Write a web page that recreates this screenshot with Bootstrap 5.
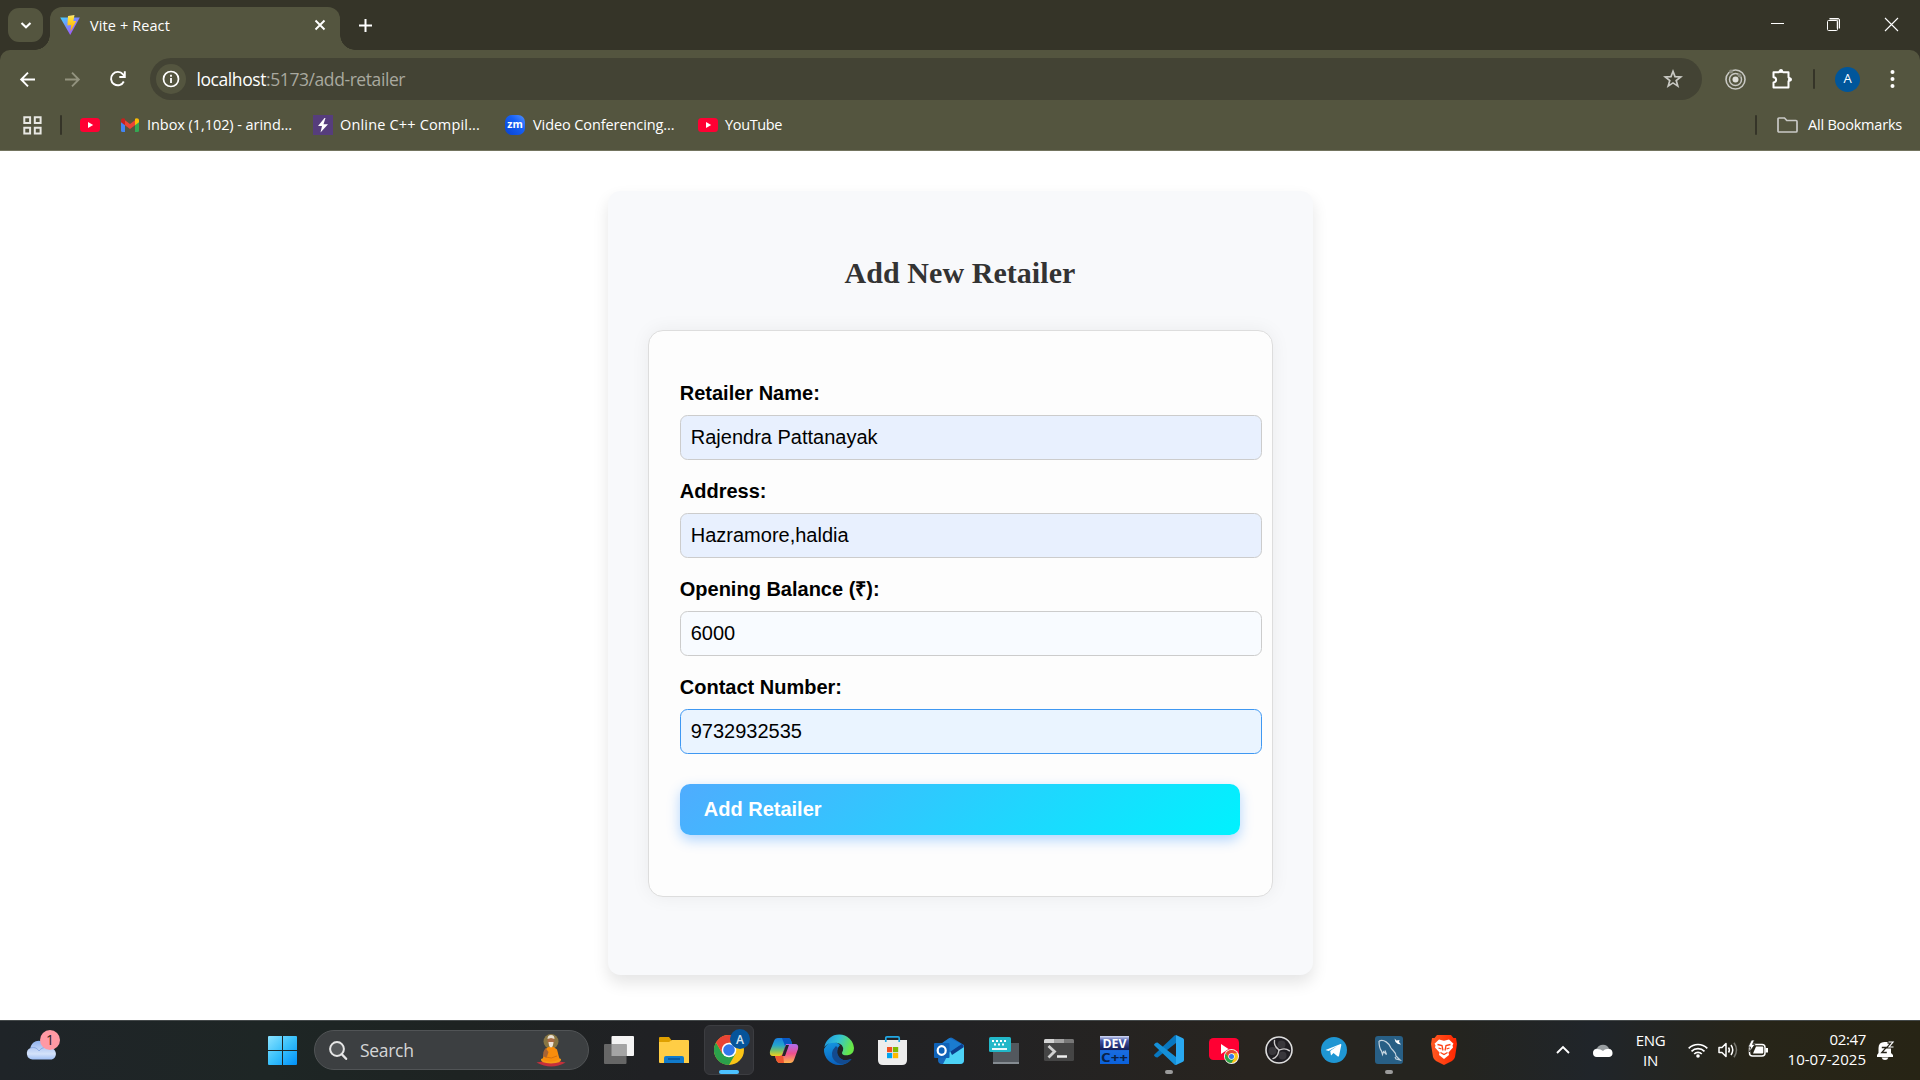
<!DOCTYPE html>
<html lang="en">
<head>
<meta charset="utf-8">
<meta name="viewport" content="width=device-width, initial-scale=1">
<title>Vite + React</title>
<link href="https://cdn.jsdelivr.net/npm/bootstrap@5.3.0/dist/css/bootstrap.min.css" rel="stylesheet">
<style>
  :root { --frame:#353428; --bar:#54553f; --omni:#434334; }
  body { width:1920px; height:1080px; overflow:hidden; background:#fff; font-family:"Open Sans","Noto Sans",sans-serif; color:#fff; }
  svg { display:block; flex:none; overflow:visible; }
  /* tab strip */
  .tabstrip { height:50px; background:var(--frame); }
  .tab-search { width:35px; height:34px; margin:8px 7px 0 8px; border-radius:11px; background:var(--bar); }
  .active-tab { width:290px; height:43px; margin-top:7px; padding:0 15px 7px 10px; background:var(--bar); border-radius:12px 12px 0 0; position:relative; }
  .active-tab::before,.active-tab::after { content:""; position:absolute; bottom:0; width:15px; height:15px; }
  .active-tab::before { left:-15px; background:radial-gradient(circle at 0 0,transparent 14.5px,var(--bar) 15px); }
  .active-tab::after { right:-15px; background:radial-gradient(circle at 100% 0,transparent 14.5px,var(--bar) 15px); }
  .tab-title { font-size:14.5px; letter-spacing:.1px; margin-left:10px; padding-top:1px; }
  .new-tab { margin:19px 0 0 19px; }
  .win-buttons { padding:18px 22px 0 0; }
  .win-buttons svg + svg { margin-left:43px; }
  .win-buttons svg:last-child { margin-left:45px; }
  /* toolbar */
  .toolbar-wrap { background:var(--frame); }
  .toolbar { height:50px; padding-top:8px; background:var(--bar); border-radius:10px 10px 0 0; align-items:flex-start; }
  .toolbar > .d-flex { height:42px; }
  .nav-buttons { gap:30px; padding-left:20px; }
  .omnibox { width:1552px; margin-left:24px; border-radius:21px; background:var(--omni); padding:0 19.5px 0 6px; }
  .site-info { width:30px; height:30px; border-radius:50%; background:var(--bar); }
  .address { font-size:17.5px; letter-spacing:-.42px; margin-left:10.500px; color:#a9a99f; }
  .vsep { width:2px; height:20px; border-radius:1px; background:var(--frame); }
  .avatar { width:25px; height:25px; border-radius:50%; background:#00569b; font-size:13px; }
  /* bookmarks */
  .bookmarks { height:51px; background:var(--bar); border-bottom:1px solid #73745f; font-size:14.5px; padding:0 18px 0 23px; white-space:nowrap; }
  .bookmarks span { letter-spacing:-.2px; line-height:20px; }
  .bookmarks .bm-mail { margin-left:8px; width:166px; letter-spacing:-.06px; }
  .bookmarks .bm-cpp { margin-left:7px; width:165px; letter-spacing:.17px; }
  .bookmarks .bm-zoom { margin-left:8px; width:165px; letter-spacing:-.09px; }
  .bookmarks .bm-yt { margin-left:7px; letter-spacing:-.35px; }
  /* page */
  .page { height:869px; padding-top:40px; font-family:"Liberation Sans",Arial,sans-serif; color:#000; }
  .shell { width:705px; height:784px; padding:64px 40px 0; border-radius:12.5px; background:#f8f9fb; box-shadow:0 8px 16px rgba(0,0,0,.105); }
  .shell h2 { margin:0; font:bold 30px/36px "Liberation Serif","Times New Roman",serif; letter-spacing:.05px; color:#333; text-align:center; }
  .entry { width:625px; height:567px; margin-top:39px; padding:50px 31px 0 31.25px; background:#fdfdfd; border:1px solid #ddd; border-radius:15px; box-shadow:0 0 19px rgba(0,0,0,.06); }
  .entry label { display:block; height:34px; padding-top:1px; font-size:20px; line-height:23px; font-weight:bold; }
  .entry .form-control { width:582px; height:45px; margin-bottom:19px; padding:0 10px 1px; font-size:20px; color:#000; background:#f8fbff; border:1px solid #ccc; border-radius:7.5px; box-shadow:none; }
  .entry .filled { background:#e8f0fe; }
  .entry .active-field { background:#eaf4ff; border-color:#3f98f2; }
  .entry .btn { width:560px; height:51px; margin-top:11px; padding:0 24px 2px; border:0; border-radius:10px; font-size:20px; font-weight:bold; text-align:left; color:#fff; background:linear-gradient(135deg,#4facfe,#00f2fe); box-shadow:0 5px 13px rgba(0,123,255,.3); }
  /* taskbar */
  .taskbar { height:60px; border-top:1px solid #44494a; background:linear-gradient(90deg,#1f2428 0,#1e2625 14%,#1e2322 24%,#202124 34%,#222224 50%,#28241f 65%,#24241f 76%,#20252a 83%,#272519 91%,#272415 100%); }
  .weather { width:268px; padding-left:25.5px; }
  .search-pill { width:275px; height:40px; margin:-1px 12px 0 17px; border-radius:20px; border:1px solid #515456; background:#3c3f41; padding:0 22px 0 14px; }
  .search-pill span { font-size:17.5px; letter-spacing:-.3px; color:#d5d6d7; margin-left:13px; }
  .apps { margin-left:-7px; }
  .app { width:50px; height:50px; margin-right:5px; margin-top:-1px; position:relative; border-radius:6px; }
  .app.current { background:#303135; border:1px solid #3c3d41; }
  .app.current::after,.app.open::after { content:""; position:absolute; bottom:1px; left:50%; height:4px; border-radius:2px; transform:translateX(-50%); }
  .app.current::after { bottom:0; width:20px; background:#4cc2ff; }
  .app.open::after { width:8px; background:#9b9b9b; }
  .tray { font-size:15px; line-height:20px; letter-spacing:-.35px; }
  .clock { width:98px; margin-top:-4px; }
  .clock .day { letter-spacing:.02px; }
</style>
</head>
<body>
<svg width="0" height="0" class="position-absolute">
  <defs>
    <linearGradient id="viteA" x1="0" y1="0" x2="1" y2="1"><stop stop-color="#41d1ff"/><stop offset="1" stop-color="#bd34fe"/></linearGradient>
    <linearGradient id="viteB" x1="0" y1="0" x2="0" y2="1"><stop stop-color="#ffea83"/><stop offset=".2" stop-color="#ffdd35"/><stop offset="1" stop-color="#ffa800"/></linearGradient>
    <linearGradient id="zoomG" x1="0" y1="1" x2="1" y2="0"><stop stop-color="#0842d0"/><stop offset=".6" stop-color="#1660f5"/><stop offset="1" stop-color="#5291ff"/></linearGradient>
    <linearGradient id="winG" x1="0" y1="0" x2="1" y2="1" gradientUnits="objectBoundingBox"><stop stop-color="#8be3ff"/><stop offset=".5" stop-color="#38c0fb"/><stop offset="1" stop-color="#0090f8"/></linearGradient>
    <linearGradient id="cloudG" x1="0" y1="0" x2="0" y2="1"><stop stop-color="#8fb2ee"/><stop offset=".7" stop-color="#d4e2fa"/><stop offset="1" stop-color="#a0c0f5"/></linearGradient>
    <symbol id="yt" viewBox="0 0 20 14"><rect width="20" height="14" rx="3.5" fill="#ff0033"/><path d="M8 4l5.2 3L8 10z" fill="#fff"/></symbol>
    <symbol id="chrome" viewBox="-15 -15 30 30"><circle r="15" fill="#fbc516"/><path d="M-13 -7.5A15 15 0 0 0 0 15L6.5 3.7 0 0-6.5 3.7z" fill="#2ba14b"/><path d="M-13-7.5A15 15 0 0 1 13-7.5H0L-6.500 3.700z" fill="#e94335"/><circle r="7.3" fill="#fff"/><circle r="5.8" fill="#3378ea"/></symbol>
  </defs>
</svg>

<header>
  <div class="tabstrip d-flex">
    <button class="tab-search btn p-0 border-0 d-flex align-items-center justify-content-center">
      <svg width="12" height="12" viewBox="0 0 12 12"><path d="M1.500 4L6 8.300 10.500 4" fill="none" stroke="#fff" stroke-width="2.1"/></svg>
    </button>
    <div class="active-tab d-flex align-items-center">
      <svg width="20" height="20" viewBox="0 0 20 20"><path d="M.2 2.4L19.8 2.4 10.2 20z" fill="url(#viteA)"/><path d="M8 1l6.5-1-1.2 6 3 .1-5.8 10.4.6-6.5-3.7.5z" fill="url(#viteB)"/></svg>
      <span class="tab-title">Vite + React</span>
      <svg class="ms-auto" width="10" height="10" viewBox="0 0 10 10"><path d="M.5.5l9 9m0-9l-9 9" stroke="#fff" stroke-width="1.9"/></svg>
    </div>
    <svg class="new-tab" width="13" height="13" viewBox="0 0 13 13"><path d="M6.5 0v13M0 6.5h13" stroke="#fff" stroke-width="2"/></svg>
    <div class="win-buttons ms-auto d-flex">
      <svg width="13" height="13" viewBox="0 0 13 13"><path d="M0 5.5h13" stroke="#fff"/></svg>
      <svg width="13" height="13" viewBox="0 0 13 13" fill="none" stroke="#fff"><path d="M2.5 1.5h8v9" stroke="#99988f" stroke-width="2"/><path d="M2.5.5H11a1.5 1.5 0 0 1 1.5 1.5v8.500"/><rect x=".5" y="2.500" width="10" height="10" rx="1"/></svg>
      <svg width="13" height="13" viewBox="0 0 13 13"><path d="M0 0l13 13M13 0L0 13" stroke="#fff" stroke-width="1.100"/></svg>
    </div>
  </div>

  <div class="toolbar-wrap">
    <nav class="toolbar d-flex">
      <div class="nav-buttons d-flex align-items-center">
        <svg width="15" height="15" viewBox="0 0 15 15" fill="none" stroke="#fff" stroke-width="1.900"><path d="M15 7.500H1.500M8 .7L1.200 7.500 8 14.300"/></svg>
        <svg width="15" height="15" viewBox="0 0 15 15" fill="none" stroke="#93937f" stroke-width="1.900"><path d="M0 7.500h13.500M7 .7l6.800 6.800L7 14.300"/></svg>
        <svg width="16" height="16" viewBox="0 0 16 16" fill="none" stroke="#fff" stroke-width="1.900"><path d="M13.800 10.500A6.700 6.700 0 1 1 13 3.400l1.500 1.800"/><path d="M14.800 .3v5.700H9.300"/></svg>
      </div>
      <div class="omnibox d-flex align-items-center">
        <span class="site-info d-flex align-items-center justify-content-center"><svg width="18" height="18" viewBox="0 0 18 18"><circle cx="9" cy="9" r="7.500" fill="none" stroke="#fff" stroke-width="1.700"/><path d="M9 8v5M9 4.700v2" stroke="#fff" stroke-width="1.800"/></svg></span>
        <span class="address"><span class="text-white">localhost</span>:5173/add-retailer</span>
        <svg class="ms-auto" width="20" height="20" viewBox="0 0 20 20"><path d="M10 2.300l2 5.300 5.700.3-4.500 3.600 1.600 5.600-4.800-3.200-4.800 3.200 1.600-5.600-4.500-3.600 5.700-.3z" fill="none" stroke="#c9c9c3" stroke-width="1.700"/></svg>
      </div>
      <div class="d-flex align-items-center" style="padding-left:23px">
        <svg width="21" height="21" viewBox="0 0 21 21" fill="none" stroke="#c8c8c3"><circle cx="10.500" cy="10.500" r="9.500" stroke-width="1.600"/><circle cx="10.500" cy="10.500" r="6" stroke-width="1.500"/><circle cx="10.500" cy="10.500" r="3" fill="#deded9" stroke="none"/><circle cx="6" cy="2.500" r="2" fill="#8b8c80" stroke="none"/><circle cx="14.500" cy="6.500" r="2" fill="#8b8c80" stroke="none"/></svg>
        <svg style="margin:-2px 0 0 25.500px" width="20" height="21" viewBox="0 0 20 21"><path d="M1.500 4.200H7a2.200 2.200 0 0 1 4 0h5.500v5.300a2 2 0 0 1 0 3.800v6.200h-15v-5c3.500-.3 3.500-5 0-5.300z" fill="none" stroke="#fff" stroke-width="2" stroke-linejoin="round"/><circle cx="9" cy="3" r="2" fill="#fff"/><circle cx="18" cy="11.400" r="2" fill="#fff"/></svg>
        <span class="vsep" style="margin:0 20px 0 21.500px"></span>
        <span class="avatar d-flex align-items-center justify-content-center">A</span>
        <svg style="margin-left:30px" width="5" height="18" viewBox="0 0 5 18" fill="#fff"><circle cx="2.500" cy="2" r="2"/><circle cx="2.500" cy="9" r="2"/><circle cx="2.500" cy="16" r="2"/></svg>
      </div>
    </nav>
  </div>

  <nav class="bookmarks d-flex align-items-center">
    <svg width="19" height="19" viewBox="0 0 19 19" fill="none" stroke="#e8e8e3" stroke-width="2"><path d="M1.300 1.300h5.800v5.800H1.300zM11.800 1.300h5.800v5.800h-5.800zM1.300 11.800h5.800v5.800H1.300zM11.800 11.800h5.800v5.800h-5.800z"/></svg>
    <span class="vsep" style="margin:0 18px 0 18px"></span>
    <svg width="20" height="14"><use href="#yt"/></svg>
    <svg style="margin-left:21px" width="18" height="14" viewBox="0 0 18 14"><path d="M0 2v10.500Q0 14 1.500 14H4V5z" fill="#4285f4"/><path d="M18 2v10.500q0 1.500-1.500 1.500H14V5z" fill="#34a853"/><path d="M4 2.200l5 3.800 5-3.800v5L9 11 4 7.200z" fill="#ea4335"/><path d="M0 2.500C0 .2 2.300-.5 4 .8v6.400L0 4.200z" fill="#c5221f"/><path d="M18 2.500C18 .2 15.700-.5 14 .8v6.400l4-3z" fill="#fbbc04"/></svg>
    <span class="bm-mail">Inbox (1,102) - arind...</span>
    <svg width="20" height="20" viewBox="0 0 20 20"><rect width="20" height="20" fill="#563d7c"/><path d="M11.500 3L5 11h4l-1.500 6.500 7.500-8.300h-4.500L12.500 3z" fill="#fff"/></svg>
    <span class="bm-cpp">Online C++ Compil...</span>
    <svg width="20" height="20" viewBox="0 0 20 20"><rect width="20" height="20" rx="7" fill="url(#zoomG)"/><text x="10" y="13" text-anchor="middle" textLength="15.500" lengthAdjust="spacingAndGlyphs" font-family="Open Sans, sans-serif" font-weight="700" font-size="10" fill="#fff">zm</text></svg>
    <span class="bm-zoom">Video Conferencing...</span>
    <svg width="20" height="14"><use href="#yt"/></svg>
    <span class="bm-yt">YouTube</span>
    <span class="vsep ms-auto" style="margin-right:20px"></span>
    <svg width="21" height="16" viewBox="0 0 21 16"><path d="M2 1h5.500l2.300 2.500H19q1 0 1 1V14q0 1-1 1H2q-1 0-1-1V2q0-1 1-1z" fill="none" stroke="#c9c9c6" stroke-width="1.700"/></svg>
    <span style="margin-left:10px;width:94px">All Bookmarks</span>
  </nav>
</header>

<main class="page">
  <section class="shell mx-auto">
    <h2>Add New Retailer</h2>
    <form class="entry">
      <label for="name">Retailer Name:</label>
      <input id="name" class="form-control filled" value="Rajendra Pattanayak">
      <label for="addr">Address:</label>
      <input id="addr" class="form-control filled" value="Hazramore,haldia">
      <label for="bal">Opening Balance (₹):</label>
      <input id="bal" class="form-control" value="6000">
      <label for="phone">Contact Number:</label>
      <input id="phone" class="form-control active-field" value="9732932535">
      <button type="button" class="btn">Add Retailer</button>
    </form>
  </section>
</main>

<footer class="taskbar d-flex align-items-center">
  <div class="weather">
    <svg style="margin-top:-12px" width="34" height="30" viewBox="0 0 34 30"><path d="M6.500 29.500A6 6 0 0 1 4.500 18C5 12 13 8 18.500 13c3 1.500 4 3 4.500 5 9-.5 9 11.500 1.500 11.500z" fill="url(#cloudG)"/><path d="M4.500 18c5-1.500 7 1 8.500 3 2-3 6-4.500 10-3" fill="none" stroke="#7e9fdd" stroke-width=".8"/><circle cx="24" cy="10" r="10" fill="#ff99a4"/><text x="24" y="15" text-anchor="middle" font-family="Open Sans, sans-serif" font-size="14" fill="#2b1d20">1</text></svg>
  </div>
  <svg width="29" height="29" viewBox="0 0 29 29"><path d="M1 0h13v14H0V1q0-1 1-1zM15 0h13q1 0 1 1v13H15zM0 15h14v14H1q-1 0-1-1zM15 15h14v13q0 1-1 1H15z" fill="url(#winG)"/></svg>
  <div class="search-pill d-flex align-items-center">
    <svg width="18" height="19" viewBox="0 0 18 19"><circle cx="8" cy="8" r="6.900" fill="#55585a" stroke="#e6e6e6" stroke-width="2"/><path d="M12.800 13.200l4.300 4.600" stroke="#e6e6e6" stroke-width="2.400" stroke-linecap="round"/></svg>
    <span>Search</span>
    <svg class="ms-auto" width="30" height="33" viewBox="0 0 30 33"><circle cx="15" cy="7.500" r="7.500" fill="#a88f45" opacity=".7"/><path d="M.5 28.500l9-1.500h11l9 1.500q-14 8-29 0z" fill="#c6303b"/><path d="M5 25q10-5 20 0 1 4-10 4.500Q4 29 5 25z" fill="#f79a16"/><path d="M9 15.500q6-6 12 0l2.500 9.500q-8 5-17 1z" fill="#f98d0b"/><path d="M9.500 14q-3 4-2.500 8l3.500 2 2-6z" fill="#a86433"/><circle cx="15" cy="6.500" r="3.500" fill="#a86a42"/><path d="M11.500 5a3.500 4 0 0 1 7 0l-3.500-1z" fill="#e8dfd0"/><path d="M12.500 8h5q-.3 5-2.500 5.500Q12.800 13 12.500 8z" fill="#eee4d8"/><path d="M10 23q5 2.500 11-1" stroke="#d8720f" fill="none"/></svg>
  </div>

  <div class="apps d-flex">
    <div class="app d-flex align-items-center justify-content-center"><svg width="30" height="28" viewBox="0 0 30 28"><rect x="7.500" width="22.500" height="20" rx="1" fill="#f4f4f4"/><rect y="8" width="22.500" height="20" rx="1" fill="#666"/><path d="M7.500 8h15v12h-15z" fill="#a4a4a4"/></svg></div>
    <div class="app d-flex align-items-center justify-content-center"><svg width="30" height="26" viewBox="0 0 30 26"><path d="M0 1q0-1 1-1h9l3 4v6H0z" fill="#dfa000"/><path d="M0 5h10l3-2h16q1 0 1 1v22H1q-1 0-1-1z" fill="#ffcd45"/><path d="M5 26v-5q0-2 2-2h16q2 0 2 2v5z" fill="#117bcc"/><path d="M9 22h12" stroke="#084f93" stroke-width="1.500"/></svg></div>
    <div class="app current d-flex align-items-center justify-content-center"><svg width="30" height="30" viewBox="-15 -15 30 30"><use href="#chrome" x="-15" y="-15" width="30" height="30"/><circle cx="11" cy="-11" r="10" fill="#06549a"/><text x="11" y="-6.300" text-anchor="middle" font-family="Open Sans, sans-serif" font-weight="600" font-size="12" fill="#d5e4f2">A</text></svg></div>
    <div class="app d-flex align-items-center justify-content-center"><svg width="30" height="27" viewBox="0 0 30 27"><defs><linearGradient id="cpA" x1="0" y1="0" x2="0" y2="1"><stop stop-color="#1a7fe0"/><stop offset=".4" stop-color="#24a4ce"/><stop offset=".7" stop-color="#75c06a"/><stop offset="1" stop-color="#f4cf1c"/></linearGradient><linearGradient id="cpB" x1="0" y1="0" x2="0" y2="1"><stop stop-color="#ad6ef0"/><stop offset=".5" stop-color="#ee508f"/><stop offset="1" stop-color="#ffb64a"/></linearGradient></defs><path d="M9 1h10q2.500 0 3.500 4l.5 2h-4q-2 0-3 3l-3 9H4q-4 0-3-5L5 4q1-3 4-3z" fill="url(#cpA)"/><path d="M13 1h6q2.500 0 3.500 4l.5 2h-4q-2 0-3 2z" fill="#0858c5"/><path d="M21 26H11q-3 0-4-4l-1-3h5q2 0 3-3l3-9h9q4 0 3 5l-4 11q-1 3-4 3z" fill="url(#cpB)"/><path d="M15 26h-4q-3 0-4-4l-1-3h5q2 0 3-2z" fill="#ef5730"/><path d="M17 8h3l-4 11h-3z" fill="#26242a"/></svg></div>
    <div class="app d-flex align-items-center justify-content-center"><svg width="30" height="30" viewBox="0 0 30 30"><defs><linearGradient id="edA" x1="0" y1="0" x2="1" y2=".3"><stop stop-color="#1d91df"/><stop offset=".5" stop-color="#32c1d6"/><stop offset="1" stop-color="#67e747"/></linearGradient><linearGradient id="edB" x1="0" y1="0" x2=".3" y2="1"><stop stop-color="#159ae2"/><stop offset="1" stop-color="#0a61bd"/></linearGradient></defs><path d="M0 14A15 15 0 0 0 15 30q8 0 12.500-6-9 3-13-2-4-6 1.500-12Q7 2 0 14z" fill="url(#edB)"/><path d="M12 11q-7 7-2 14 5 6 13 3 3-1.500 4.500-4-8 3-12-1.500Q12 18 14 13z" fill="#134a8e"/><path d="M.3 12A15 15 0 0 1 30 13q0 6.500-6.500 7.300-5.500.2-5.500-2.300 0-1 1-2.500Q20 9 12.500 7.800 4 7 .3 12z" fill="url(#edA)"/></svg></div>
    <div class="app d-flex align-items-center justify-content-center pe-1"><svg width="29" height="29" viewBox="0 0 29 29"><path d="M0 4h29v20q0 5-5 5H5q-5 0-5-5z" fill="#ededed"/><path d="M7.800 6V2q0-1.200 1.200-1.200h11q1.200 0 1.200 1.200v4" fill="none" stroke="#22a8e4" stroke-width="1.700"/><path d="M9 11h5.200v5.200H9z" fill="#f25022"/><path d="M15 11h5.200v5.200H15z" fill="#7fba00"/><path d="M9 17h5.200v5.200H9z" fill="#00a4ef"/><path d="M15 17h5.200v5.200H15z" fill="#ffb900"/></svg></div>
    <div class="app d-flex align-items-center justify-content-center"><svg width="30" height="27" viewBox="0 0 30 27"><path d="M5 8L15.500 1q1.500-1 3 0L30 8v15q0 4-4 4H8q-4 0-4-4z" fill="#1769bd"/><path d="M16 14l14-5v14q0 4-4 4H9z" fill="#4dd2f6"/><path d="M16 14L28 7l2 3-12 8z" fill="#0b3f8d"/><path d="M9 5.500L15.500 1l12 6L16 15l-4-4z" fill="#1a7bd0"/><rect y="6" width="15.500" height="15" rx="1" fill="#0f62b8"/><ellipse cx="7.700" cy="13.500" rx="4" ry="4.300" fill="none" stroke="#fff" stroke-width="2.200"/></svg></div>
    <div class="app d-flex align-items-center justify-content-center"><svg width="30" height="27" viewBox="0 0 30 27"><path d="M4 6h26v21H4z" fill="#53585e"/><path d="M4 25h26v2H4z" fill="#858b91"/><rect width="22" height="15" rx="1.500" fill="#22b8c9"/><path d="M3 4h16M5 7.500h12" stroke="#fff" stroke-width="1.800" stroke-dasharray="2 2"/><path d="M3 12h15" stroke="#fff" stroke-width="1.800"/></svg></div>
    <div class="app d-flex align-items-center justify-content-center"><svg width="30" height="22" viewBox="0 0 30 22"><rect width="30" height="22" rx="1.500" fill="#454545"/><path d="M0 4V1.500Q0 0 1.500 0H10v4z" fill="#d4d4d4"/><path d="M10 0h10v4H10z" fill="#a3a3a3"/><path d="M20 0h8.500Q30 0 30 1.500V4H20z" fill="#777"/><path d="M4.500 7l6 5.500-6 6" fill="none" stroke="#d0d0d0" stroke-width="2.800"/><path d="M13 17.500h10" stroke="#eee" stroke-width="2.500"/></svg></div>
    <div class="app d-flex align-items-center justify-content-center"><svg width="29" height="28" viewBox="0 0 29 28"><defs><linearGradient id="devG" x1="0" y1="0" x2="0" y2="1"><stop stop-color="#d5dcf6"/><stop offset=".17" stop-color="#4355a8"/><stop offset=".48" stop-color="#131c59"/><stop offset=".52" stop-color="#1a6de0"/><stop offset="1" stop-color="#0b61db"/></linearGradient></defs><rect width="29" height="28" fill="url(#devG)"/><g font-family="Open Sans, sans-serif" font-weight="700"><text x="2.500" y="12.300" font-size="11.500" textLength="24" lengthAdjust="spacingAndGlyphs" fill="#fff">DEV</text><text x="1" y="25.800" font-size="12.500" textLength="27" lengthAdjust="spacingAndGlyphs" fill="#0a2247">C++</text></g></svg></div>
    <div class="app open d-flex align-items-center justify-content-center"><svg width="30" height="30" viewBox="0 0 30 30"><path d="M22 0l7 3.200q1 .5 1 1.700v20.200q0 1.200-1 1.700L22 30z" fill="#29a8f0"/><path d="M22 0v8L3.500 22.500 1.800 22.200.4 21q-.8-.8 0-1.600L20.500.6Q21.500 0 22 0z" fill="#0877bf"/><path d="M22 30v-8L3.500 7.500 1.800 7.800.4 9q-.8.8 0 1.600l20 18.800q.8.800 1.600.6z" fill="#1590d8"/></svg></div>
    <div class="app d-flex align-items-center justify-content-center"><svg width="30" height="26" viewBox="0 0 30 26" style="margin-top:2px"><rect width="30" height="22" rx="4.500" fill="#ff0033"/><path d="M12 6l7.500 5-7.500 5z" fill="#fff"/><circle cx="22.500" cy="18.500" r="7.500" fill="#f2f2f2"/><use href="#chrome" x="16" y="12" width="13" height="13"/></svg></div>
    <div class="app d-flex align-items-center justify-content-center"><svg width="28" height="28" viewBox="-14 -14 28 28"><circle r="13" fill="#1f1d22" stroke="#dedede" stroke-width="1.600"/><circle cx="2.500" cy="-5.500" r="4" fill="#39373c"/><circle cx="3.500" cy="5.500" r="4" fill="#39373c"/><circle cx="-6.500" cy="1" r="4" fill="#39373c"/><g fill="none" stroke="#c9c7c9" stroke-width="1.400" stroke-linecap="round"><path id="obsArm" d="M0 0C-1-1.500-5.500-3-4.500-9.500"/><use href="#obsArm" transform="rotate(120)"/><use href="#obsArm" transform="rotate(240)"/></g></svg></div>
    <div class="app d-flex align-items-center justify-content-center"><svg width="26" height="26" viewBox="0 0 26 26"><circle cx="13" cy="13" r="13" fill="#1f96d3"/><path d="M4.500 13L19.500 7q1-.2.800 1l-2.300 11q-.5 1-1.500.3L12.500 16l-2.500 2.500-.8-4.500 7-5-8.500 5z" fill="#fff"/></svg></div>
    <div class="app open d-flex align-items-center justify-content-center"><svg width="28" height="28" viewBox="0 0 28 28"><rect width="28" height="28" rx="3" fill="#285f85"/><path d="M4 5c5-2 10 2 12 7 2 3 5 4 5 8l4 4-4-1-1-2M4 5c0 4 0 7 2.500 10l1 3.500 1-3 3 3-1.500-4" fill="none" stroke="#c5d4df" stroke-width="1.200"/><path d="M19.500 2.500l2 2 3-.5-.5 2 2 2.500-3-.5-2.500-2z" fill="#fff"/></svg></div>
    <div class="app d-flex align-items-center justify-content-center"><svg width="26" height="30" viewBox="0 0 26 30"><defs><linearGradient id="brG"><stop stop-color="#ff5a22"/><stop offset="1" stop-color="#ff2500"/></linearGradient></defs><path d="M6 0h14l2.500 3H25l1 6-2 13q-.5 2-3 4l-8 4-8-4q-2.500-2-3-4L0 9l1-6h2.500z" fill="url(#brG)"/><path d="M8 4.500l5 1.200 5-1.200 4.500 4.300-1 1.500.5 2.200-4.500 5 .5 2.500-5 4-5-4 .5-2.500L4 12.500l.5-2.200-1-1.500z" fill="#fff"/><path d="M6.500 9.500l4.500 1 1 5M19.500 9.500l-4.500 1-1 5M9.500 17.500l3.500 2 3.500-2M7.500 13l3 1M18.500 13l-3 1" fill="none" stroke="#ff4315" stroke-width="1.300"/></svg></div>
  </div>

  <div class="tray ms-auto d-flex align-items-center">
    <svg width="14" height="8" viewBox="0 0 14 8" style="margin:-2px 23px 0 0"><path d="M1 7l6-6 6 6" fill="none" stroke="#fff" stroke-width="1.900"/></svg>
    <svg style="margin-top:-1px" width="20" height="14" viewBox="0 0 20 14"><path d="M4.500 14A4.500 4.500 0 0 1 4 5.200 6.500 6 0 0 1 16 5.500a4.500 4.500 0 0 1 0 8.500z" fill="#999ea1"/><path d="M4 14a4 4 0 0 1 0-8q4 0 6 2 2-2.500 5-2a4 4 0 0 1 1 8z" fill="#fff"/></svg>
    <div class="text-center" style="width:75px;margin-top:-1px"><div>ENG</div><div>IN</div></div>
    <svg style="margin-top:-2px" width="20" height="16" viewBox="0 0 20 16" fill="none" stroke="#fff" stroke-width="1.700"><path d="M.7 6.300a13.300 13.300 0 0 1 18.600 0M3.500 9.300a9.300 9.300 0 0 1 13 0M6.200 12a5.400 5.400 0 0 1 7.600 0"/><circle cx="10" cy="14" r="1.800" fill="#fff" stroke="none"/></svg>
    <svg style="margin:-1px 0 0 10px" width="20" height="16" viewBox="0 0 20 16" fill="none" stroke="#fff" stroke-width="1.500"><path d="M1 5.500h3l4-4v13l-4-4H1z" stroke-linejoin="round"/><path d="M10.500 5.500q1.800 2.500 0 5M13 3q3.500 5 0 10"/><path d="M16 .800q5 7.200 0 14.400" stroke="#75756e"/></svg>
    <svg style="margin:-4px 0 0 10px" width="20" height="18" viewBox="0 0 20 18"><rect x="1.500" y="4.500" width="15.500" height="11.500" rx="3" fill="none" stroke="#fff" stroke-width="1.500"/><path d="M5 13.500L8 6.500h6.500q.8 0 .8 1v5q0 1-1 1z" fill="#fff"/><path d="M17.500 8h2.500v4.500h-2.500z" fill="#fff"/><path d="M3.500 0L0 7h2.500L1.500 12 7 4.500H4.500L6.500 0z" fill="#fff" stroke="#25241d" stroke-width=".8"/></svg>
    <div class="clock text-end"><div>02:47</div><div class="day">10-07-2025</div></div>
    <svg style="margin:0 26px 0 11px" width="17" height="19" viewBox="0 0 17 19"><path d="M1.500 12V7q0-6 6-6H14v11l2 2v2H0v-2zM4.500 16.500h7q-1 2.500-3.500 2.500t-3.500-2.500z" fill="#fff"/><path d="M4.800 6.500h4.500l-4.500 5h5" fill="none" stroke="#26241a" stroke-width="1.300"/><path d="M10.500 1.200h5L11.500 6H16" fill="none" stroke="#26241a" stroke-width="3"/><path d="M11.500 1H16l-4 5h4.500" fill="none" stroke="#fff" stroke-width="1.200"/></svg>
  </div>
</footer>
<script src="https://cdn.jsdelivr.net/npm/bootstrap@5.3.0/dist/js/bootstrap.bundle.min.js"></script>
</body>
</html>
